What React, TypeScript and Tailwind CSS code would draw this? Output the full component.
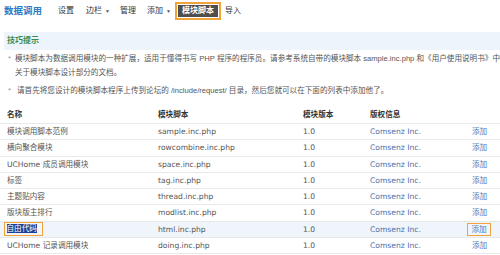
import React from "react";

const rows = [
  { name: "模块调用脚本范例", file: "sample.inc.php" },
  { name: "横向聚合模块", file: "rowcombine.inc.php" },
  { name: "UCHome 成员调用模块", file: "space.inc.php" },
  { name: "标签", file: "tag.inc.php" },
  { name: "主题贴内容", file: "thread.inc.php" },
  { name: "版块版主排行", file: "modlist.inc.php" },
  { name: "自由代码", file: "html.inc.php", active: true },
  { name: "UCHome 记录调用模块", file: "doing.inc.php" },
];

const cjk = { fontFamily: '"Liberation Sans", "Noto Sans CJK SC", sans-serif' };
const tableFont = { fontFamily: '"DejaVu Sans", "Noto Sans CJK SC", sans-serif' };

function Nav() {
  return (
    <div className="flex h-[22px] items-center text-[8px] leading-[12px] text-[#333]" style={cjk}>
      <span className="ml-[4px] text-[9.5px] font-bold text-[#2c7bc4]">数据调用</span>
      <span className="ml-[16px]">设置</span>
      <span className="ml-[12px] flex items-center gap-[3px]">
        边栏<span className="text-[5px] text-[#555]">▼</span>
      </span>
      <span className="ml-[10px]">管理</span>
      <span className="ml-[11px] flex items-center gap-[3px]">
        添加<span className="text-[5px] text-[#555]">▼</span>
      </span>
      <span className="ml-[4px] border-2 border-[#f0a33a] bg-white p-[1px]">
        <span className="block bg-[#4e4e4e] px-[4px] font-bold text-white">模块脚本</span>
      </span>
      <span className="ml-[4px]">导入</span>
    </div>
  );
}

function Tips() {
  return (
    <div className="mt-[10px] ml-[4px] text-[7.6px] text-[#555]" style={cjk}>
      <div className="flex h-[18px] items-center bg-[#edf4fb] pl-[3px] text-[8px] font-bold text-[#3a8d4e]">
        技巧提示
      </div>
      <ul className="flex flex-col gap-[4px] whitespace-nowrap pt-[2px] leading-[14px]">
        <li className="flex">
          <span className="w-[13px] pl-[4px] text-[#999]">*</span>
          <span>
            模块脚本为数据调用模块的一种扩展，适用于懂得书写 PHP 程序的程序员。请参考系统自带的模块脚本 sample.inc.php 和《用户使用说明书》中
            <br />
            关于模块脚本设计部分的文档。
          </span>
        </li>
        <li className="flex">
          <span className="w-[13px] pl-[4px] text-[#999]">*</span>
          <span>请首先将您设计的模块脚本程序上传到论坛的 /include/request/ 目录，然后您就可以在下面的列表中添加他了。</span>
        </li>
      </ul>
    </div>
  );
}

function Table() {
  const cols = "grid grid-cols-[151px_145px_67px_102px_1fr] items-center pl-[7px] border-b border-[#e9e9e9]";
  return (
    <div className="mt-[8px] text-[7.6px] text-[#555]" style={tableFont}>
      <div className={`${cols} h-[18px] font-bold text-[#333]`}>
        <span>名称</span>
        <span>模块脚本</span>
        <span>模块版本</span>
        <span>版权信息</span>
        <span />
      </div>
      {rows.map((r) => (
        <div key={r.file} className={`${cols} h-[16.3px] ${r.active ? "bg-[#eff5fb]" : ""}`}>
          <span className="whitespace-nowrap">
            {r.active ? (
              <span className="-ml-[3px] inline-block border-[1.5px] border-[#f0a33a] py-[1px] pr-[5px] pl-[1.5px] leading-[10px]">
                <span className="bg-[#1d3f93] text-white">{r.name}</span>
              </span>
            ) : (
              r.name
            )}
          </span>
          <span>{r.file}</span>
          <span>1.0</span>
          <span className="text-[#4a6fa8]">Comsenz Inc.</span>
          <span className="text-[#4d7cc0]">
            {r.active ? (
              <span className="-ml-[5px] inline-block border-[1.5px] border-[#f0a33a] px-[3.5px] leading-[11px]">添加</span>
            ) : (
              "添加"
            )}
          </span>
        </div>
      ))}
    </div>
  );
}

export default function App() {
  return (
    <div className="h-[255px] w-[500px] overflow-hidden bg-white">
      <Nav />
      <Tips />
      <Table />
    </div>
  );
}
